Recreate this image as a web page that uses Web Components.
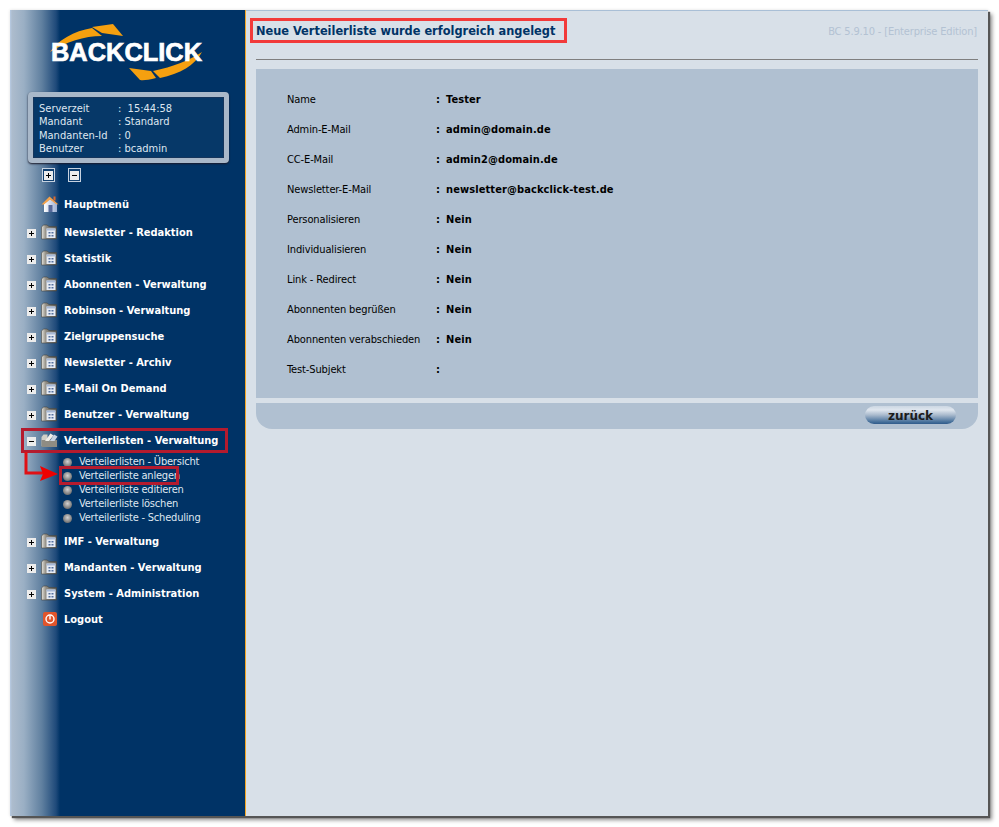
<!DOCTYPE html>
<html lang="de">
<head>
<meta charset="utf-8">
<title>Backclick</title>
<style>
    html, body { margin: 0; padding: 0; background: #fff; }
    body { padding: 10px 0 11px 10px; font-family: "DejaVu Sans", sans-serif; }
</style>
</head>
<body>
<app-shell>
    <side-bar slot="side">
        <brand-logo></brand-logo>
        <server-info></server-info>
        <tree-tools></tree-tools>
        <nav-item icon="home" label="Hauptmenü" style="margin:9px 0 2px"></nav-item>
        <nav-item icon="folder" toggle="plus" label="Newsletter - Redaktion"></nav-item>
        <nav-item icon="folder" toggle="plus" label="Statistik"></nav-item>
        <nav-item icon="folder" toggle="plus" label="Abonnenten - Verwaltung"></nav-item>
        <nav-item icon="folder" toggle="plus" label="Robinson - Verwaltung"></nav-item>
        <nav-item icon="folder" toggle="plus" label="Zielgruppensuche"></nav-item>
        <nav-item icon="folder" toggle="plus" label="Newsletter - Archiv"></nav-item>
        <nav-item icon="folder" toggle="plus" label="E-Mail On Demand"></nav-item>
        <nav-item icon="folder" toggle="plus" label="Benutzer - Verwaltung"></nav-item>
        <nav-item icon="open" toggle="minus" label="Verteilerlisten - Verwaltung">
            <sub-item>Verteilerlisten - Übersicht</sub-item>
            <sub-item>Verteilerliste anlegen</sub-item>
            <sub-item>Verteilerliste editieren</sub-item>
            <sub-item>Verteilerliste löschen</sub-item>
            <sub-item>Verteilerliste - Scheduling</sub-item>
        </nav-item>
        <nav-item icon="folder" toggle="plus" label="IMF - Verwaltung"></nav-item>
        <nav-item icon="folder" toggle="plus" label="Mandanten - Verwaltung"></nav-item>
        <nav-item icon="folder" toggle="plus" label="System - Administration"></nav-item>
        <nav-item icon="logout" label="Logout"></nav-item>
    </side-bar>
    <main-panel slot="main" heading="Neue Verteilerliste wurde erfolgreich angelegt" version="BC 5.9.10 - [Enterprise Edition]">
        <info-row label="Name" value="Tester"></info-row>
        <info-row label="Admin-E-Mail" value="admin@domain.de"></info-row>
        <info-row label="CC-E-Mail" value="admin2@domain.de"></info-row>
        <info-row label="Newsletter-E-Mail" value="newsletter@backclick-test.de"></info-row>
        <info-row label="Personalisieren" value="Nein"></info-row>
        <info-row label="Individualisieren" value="Nein"></info-row>
        <info-row label="Link - Redirect" value="Nein"></info-row>
        <info-row label="Abonnenten begrüßen" value="Nein"></info-row>
        <info-row label="Abonnenten verabschieden" value="Nein"></info-row>
        <info-row label="Test-Subjekt" value=""></info-row>
    </main-panel>
    <call-out slot="marks"></call-out>
</app-shell>

<script>
const ICONS = {
    folder: `<svg width="18" height="16" viewBox="0 0 18 16">
        <defs><linearGradient id="f" x1="0" x2="1" y1="0" y2="0"><stop offset="0" stop-color="#e6e4dc"/><stop offset=".3" stop-color="#8f8b82"/><stop offset="1" stop-color="#5c5a53"/></linearGradient></defs>
        <path d="M0.5 3 L2.5 1 H6 L8 2.5 H15.5 V15 H0.5 Z" fill="url(#f)" stroke="#45443f" stroke-width=".6"/>
        <rect x="5.5" y="4.5" width="9" height="9.5" fill="#e6ebf4"/>
        <rect x="5.5" y="4.5" width="9" height="2" fill="#a8b9d6"/>
        <path d="M7.5 8h2v1.5h-2zM10.5 8h2v1.5h-2zM7.5 11h2v1.5h-2zM10.5 11h2v1.5h-2z" fill="#54709e"/>
    </svg>`,
    open: `<svg width="18" height="16" viewBox="0 0 18 16">
        <path d="M0.5 5 L2.5 2.5 H6.5 V14 H0.5 Z" fill="#d2cfc6"/>
        <path d="M0.5 8 H16 V15 H0.5 Z" fill="#8f8c83"/>
        <path d="M4 9 L9.5 1.5 L12.5 3.5 L8 9 Z" fill="#f1efe9"/>
        <path d="M9 9 L13 2.5 L16.5 4.5 L13.5 9 Z" fill="#c9d3e2"/>
    </svg>`,
    home: `<svg width="18" height="18" viewBox="0 0 18 18">
        <defs><linearGradient id="h" x1="0" x2="1" y1="0" y2="0"><stop offset="0" stop-color="#fff"/><stop offset="1" stop-color="#9db0d4"/></linearGradient></defs>
        <path d="M3 9 L9 4 L16 9 V17 H3 Z" fill="url(#h)"/>
        <path d="M0.5 9.5 L8.5 1.5 L17.5 9.5 L15 9 L9 4.5 L3 9.5 Z" fill="#f4a24a"/>
        <rect x="12.5" y="1.5" width="2" height="4" fill="#d9692f"/>
        <rect x="7.5" y="10" width="4" height="7" fill="#55689a"/>
    </svg>`,
    logout: `<svg width="14" height="14" viewBox="0 0 14 14">
        <rect x="0" y="0" width="14" height="14" rx="2" fill="#e0552c"/>
        <circle cx="7" cy="7" r="4" fill="none" stroke="#fff" stroke-width="1.4"/>
        <path d="M7 3.5 V7.5" stroke="#fff" stroke-width="1.4"/>
    </svg>`
};

function toggleBox(kind) {
    const bar = kind === 'plus' ? 'M2 4.5 H7 M4.5 2 V7' : 'M2 4.5 H7';
    return `<svg width="9" height="9" viewBox="0 0 9 9">
        <rect width="9" height="9" fill="#ececec"/>
        <path d="${bar}" stroke="#000" stroke-width="1" fill="none"/>
    </svg>`;
}

class AppShell extends HTMLElement {
    constructor() {
        super();
        this.attachShadow({ mode: 'open' });
        this.shadowRoot.innerHTML = `
            <style>
                :host {
                    display: flex;
                    position: relative;
                    width: 978px;
                    height: 806px;
                    box-shadow: 2px 2px 1px #555, 4px 4px 4px rgba(0, 0, 0, 0.45), 0 0 3px rgba(0, 0, 0, 0.12);
                }
            </style>
            <slot name="side"></slot>
            <slot name="main"></slot>
            <slot name="marks"></slot>
        `;
    }
}

class SideBar extends HTMLElement {
    constructor() {
        super();
        this.attachShadow({ mode: 'open' });
        this.shadowRoot.innerHTML = `
            <style>
                :host {
                    display: flex;
                    flex-direction: column;
                    box-sizing: border-box;
                    width: 236px;
                    flex: none;
                    border-right: 1px solid #f5a623;
                    background: linear-gradient(90deg, #b7cbe4 0, #adbccd 2px, #9aafc4 14px, #5f7f9f 32px, #1f4a7a 46px, #003366 50px);
                }
            </style>
            <slot></slot>
        `;
    }
}

class BrandLogo extends HTMLElement {
    constructor() {
        super();
        this.attachShadow({ mode: 'open' });
        this.shadowRoot.innerHTML = `
            <style>
                :host { display: block; height: 82px; }
                svg { display: block; }
                text { font-family: "Liberation Sans", sans-serif; font-weight: 700; }
            </style>
            <svg width="235" height="82" viewBox="10 10 235 82">
                <path d="M50 52 C58 40 74 31 92 28 L102 36 C84 36 66 42 50 52 Z" fill="#f5a00f"/>
                <path d="M92 27 L113 24 L123 36 L102 33 Z" fill="#f5a00f"/>
                <path d="M129 68 L151 71 L156 78 C147 81 139 80 140 80 Z" fill="#f5a00f"/>
                <path d="M153 71 C173 67 190 60 202 52 C195 65 180 74 160 78 Z" fill="#f5a00f"/>
                <text x="51" y="61" font-size="25" fill="#fff" stroke="#fff" stroke-width=".7" textLength="151" lengthAdjust="spacingAndGlyphs">BACKCLICK</text>
            </svg>
        `;
    }
}

class ServerInfo extends HTMLElement {
    constructor() {
        super();
        this.attachShadow({ mode: 'open' });
        const rows = [['Serverzeit', ':  15:44:58'], ['Mandant', ': Standard'], ['Mandanten-Id', ': 0'], ['Benutzer', ': bcadmin']];
        this.shadowRoot.innerHTML = `
            <style>
                :host {
                    display: grid;
                    grid-template-columns: 79px 1fr;
                    grid-auto-rows: 13.4px;
                    box-sizing: border-box;
                    width: 201px;
                    height: 71px;
                    margin: 0 0 0 18px;
                    padding: 5px 0 0 6px;
                    border: 5px solid #a9b8c9;
                    border-radius: 4px;
                    background: #063868;
                    box-shadow: inset 0 0 0 1px #15355c, 0 1px 2px #1a1a2a;
                    color: #dfe7f0;
                    font: 11px/13.4px "DejaVu Sans Condensed", "DejaVu Sans", sans-serif;
                    white-space: pre;
                }
            </style>
            ${rows.map(([k, v]) => `<span>${k}</span><span>${v}</span>`).join('')}
        `;
    }
}

class TreeTools extends HTMLElement {
    constructor() {
        super();
        this.attachShadow({ mode: 'open' });
        this.shadowRoot.innerHTML = `
            <style>
                :host { display: flex; gap: 13px; margin: 5px 0 0 32px; height: 14px; }
                span {
                    display: flex;
                    align-items: center;
                    justify-content: center;
                    box-sizing: border-box;
                    width: 13px;
                    height: 14px;
                    border: 1px solid #c6d2e0;
                    background: #0f3f70;
                }
            </style>
            <span>${toggleBox('plus')}</span>
            <span>${toggleBox('minus')}</span>
        `;
    }
}

class NavItem extends HTMLElement {
    constructor() {
        super();
        this.attachShadow({ mode: 'open' });
    }

    connectedCallback() {
        const toggle = this.getAttribute('toggle');
        const icon = this.getAttribute('icon');
        this.shadowRoot.innerHTML = `
            <style>
                :host { display: block; color: #fff; }
                .row {
                    display: flex;
                    align-items: center;
                    height: 26px;
                    font: bold 11px/16px "DejaVu Sans Condensed", "DejaVu Sans", sans-serif;
                    white-space: nowrap;
                }
                .toggle { width: 9px; height: 9px; margin: 3px 0 0 17px; flex: none; line-height: 0; }
                .icon { display: flex; justify-content: center; width: 18px; margin-left: 5px; flex: none; }
                .label { margin-left: 5px; padding-top: 2px; }
                .kids { margin: 2px 0 3px; }
                svg { display: block; }
            </style>
            <div class="row">
                <span class="toggle">${toggle ? toggleBox(toggle) : ''}</span>
                <span class="icon">${ICONS[icon]}</span>
                <span class="label">${this.getAttribute('label')}</span>
            </div>
            ${this.children.length ? '<div class="kids"><slot></slot></div>' : ''}
        `;
    }
}

class SubItem extends HTMLElement {
    constructor() {
        super();
        this.attachShadow({ mode: 'open' });
        this.shadowRoot.innerHTML = `
            <style>
                :host {
                    display: flex;
                    align-items: center;
                    height: 14px;
                    padding-left: 53px;
                    color: #dfe7f0;
                    font: 11px/14px "DejaVu Sans Condensed", "DejaVu Sans", sans-serif;
                    letter-spacing: -0.2px;
                    white-space: nowrap;
                }
                i {
                    width: 9px;
                    height: 9px;
                    margin-right: 7px;
                    border-radius: 50%;
                    background: radial-gradient(circle at 50% 40%, #d2d2d2 0, #8e8e8e 50%, #4f4f4f 100%);
                }
            </style>
            <i></i><slot></slot>
        `;
    }
}

class MainPanel extends HTMLElement {
    constructor() {
        super();
        this.attachShadow({ mode: 'open' });
    }

    connectedCallback() {
        this.shadowRoot.innerHTML = `
            <style>
                :host {
                    display: block;
                    box-sizing: border-box;
                    width: 742px;
                    padding: 0 10px 0 10px;
                    background: #d8e0e8;
                    border-top: 1px solid #a9bfd6;
                }
                header {
                    display: flex;
                    justify-content: space-between;
                    height: 48px;
                    border-bottom: 1px solid #7f7f7f;
                    margin-bottom: 9px;
                }
                h1 {
                    margin: 12px 0 0;
                    color: #003366;
                    font: bold 12.65px/16px "DejaVu Sans Condensed", "DejaVu Sans", sans-serif;
                }
                .version {
                    margin: 14px 1px 0 0;
                    color: #b3c2d3;
                    font: 11px/14px "DejaVu Sans Condensed", "DejaVu Sans", sans-serif;
                    letter-spacing: -0.16px;
                }
                .table {
                    box-sizing: border-box;
                    height: 329px;
                    padding: 15px 0 0 31px;
                    background: #b0c0d1;
                }
                .foot {
                    display: flex;
                    justify-content: flex-end;
                    align-items: center;
                    box-sizing: border-box;
                    height: 26px;
                    margin-top: 5px;
                    padding: 0 22px 2px 0;
                    background: #b0c0d1;
                    border-radius: 0 0 16px 16px;
                }
            </style>
            <header>
                <h1>${this.getAttribute('heading')}</h1>
                <span class="version">${this.getAttribute('version')}</span>
            </header>
            <div class="table"><slot></slot></div>
            <div class="foot"><back-button>zurück</back-button></div>
        `;
    }
}

class InfoRow extends HTMLElement {
    constructor() {
        super();
        this.attachShadow({ mode: 'open' });
    }

    connectedCallback() {
        this.shadowRoot.innerHTML = `
            <style>
                :host {
                    display: grid;
                    grid-template-columns: 149px 10px 1fr;
                    height: 30px;
                    align-items: center;
                    padding-top: 1px;
                    box-sizing: border-box;
                    color: #000;
                    font: 11px/16px "DejaVu Sans Condensed", "DejaVu Sans", sans-serif;
                    white-space: nowrap;
                }
                span { letter-spacing: -0.12px; }
                b { font: bold 11px/16px "DejaVu Sans Condensed", "DejaVu Sans", sans-serif; letter-spacing: 0.1px; padding-top: 1px; }
            </style>
            <span>${this.getAttribute('label')}</span>
            <b>:</b>
            <b>${this.getAttribute('value')}</b>
        `;
    }
}

class BackButton extends HTMLElement {
    constructor() {
        super();
        this.attachShadow({ mode: 'open' });
        this.shadowRoot.innerHTML = `
            <style>
                :host {
                    display: block;
                    box-sizing: border-box;
                    width: 91px;
                    height: 18px;
                    border-radius: 9px;
                    background: linear-gradient(180deg, #ccd7e3 0, #dfe6ee 22%, #a9bacd 50%, #46709b 88%, #2e5a8a 100%);
                    color: #1c1c1c;
                    font: bold 12px/20px "DejaVu Sans", sans-serif;
                    text-align: center;
                }
            </style>
            <slot></slot>
        `;
    }
}

class CallOut extends HTMLElement {
    constructor() {
        super();
        this.attachShadow({ mode: 'open' });
        this.shadowRoot.innerHTML = `
            <style>
                :host { position: absolute; inset: 0; pointer-events: none; }
                div { position: absolute; box-sizing: border-box; }
                .title { left: 240px; top: 8px; width: 317px; height: 25px; border: 3px solid #f23a3a; }
                .group { left: 11px; top: 418px; width: 207px; height: 25px; border: 3px solid #b41b2e; }
                .entry { left: 49px; top: 456px; width: 120px; height: 19px; border: 3px solid #b41b2e; }
                svg { position: absolute; left: 0; top: 0; }
            </style>
            <div class="title"></div>
            <div class="group"></div>
            <div class="entry"></div>
            <svg width="60" height="480">
                <path d="M16 442 V463 H34" fill="none" stroke="#e01015" stroke-width="3"/>
                <path d="M30 456 L48 464 L30 471 L33 464 Z" fill="#f00000"/>
            </svg>
        `;
    }
}

customElements.define('app-shell', AppShell);
customElements.define('side-bar', SideBar);
customElements.define('brand-logo', BrandLogo);
customElements.define('server-info', ServerInfo);
customElements.define('tree-tools', TreeTools);
customElements.define('nav-item', NavItem);
customElements.define('sub-item', SubItem);
customElements.define('main-panel', MainPanel);
customElements.define('info-row', InfoRow);
customElements.define('back-button', BackButton);
customElements.define('call-out', CallOut);
</script>
</body>
</html>
